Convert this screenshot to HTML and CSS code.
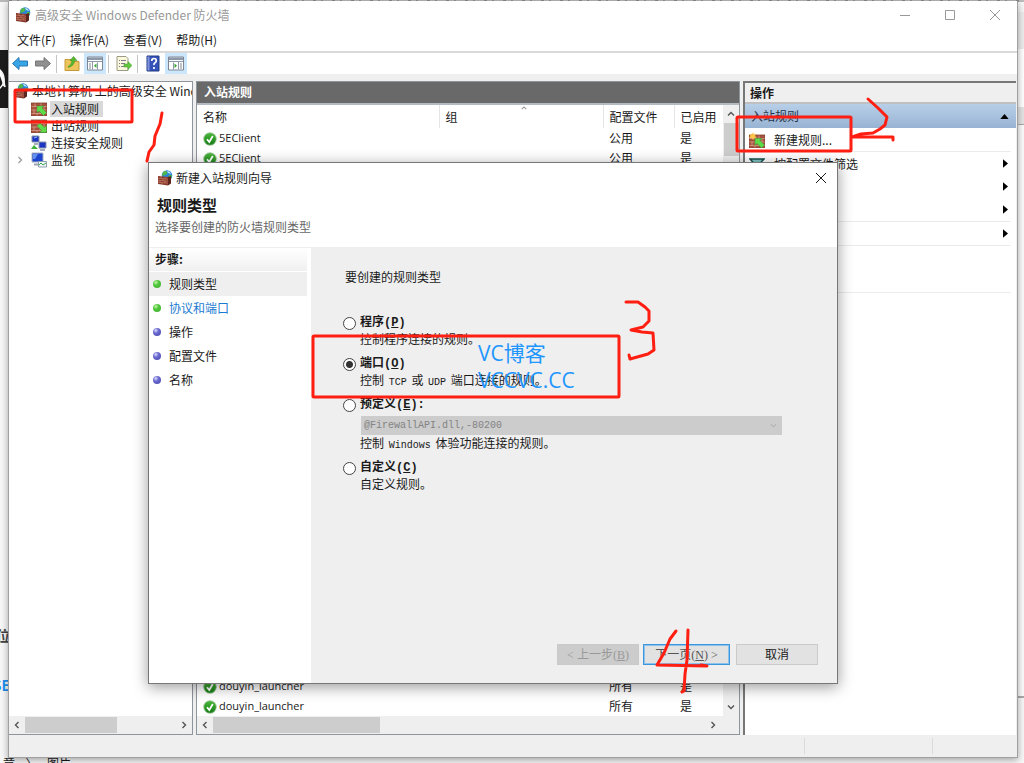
FILE: index.html
```html
<!DOCTYPE html>
<html lang="zh-CN">
<head>
    <meta charset="UTF-8">
    <meta name="viewport" content="width=device-width, initial-scale=1.0">
    <title>高级安全 Windows Defender 防火墙</title>
    <link rel="stylesheet" href="styles.css">
</head>
<body>
    <!-- Shared icons -->
    <svg class="defs" width="0" height="0">
        <defs>
            <linearGradient id="okFill" x1="0" y1="0" x2="0" y2="1">
                <stop offset="0" stop-color="#4cb83c"/>
                <stop offset="1" stop-color="#157a14"/>
            </linearGradient>
            <radialGradient id="greenBall" cx=".35" cy=".3" r=".7">
                <stop offset="0" stop-color="#c8f5b0"/>
                <stop offset=".5" stop-color="#4fc83c"/>
                <stop offset="1" stop-color="#48b636"/>
            </radialGradient>
            <radialGradient id="blueBall" cx=".35" cy=".3" r=".7">
                <stop offset="0" stop-color="#dcdcff"/>
                <stop offset=".5" stop-color="#6a6ad0"/>
                <stop offset="1" stop-color="#5454b8"/>
            </radialGradient>
        </defs>
        <symbol id="bricks" viewBox="0 0 16 14">
            <path d="M0 1h16v13H0z" fill="#a5523e"/>
            <path d="M0 4.500h16M0 8h16M0 11.500h16M4 1v3.500M10 1v3.500M7 4.500v3.500M13 4.500V8M3 8v3.500M9 8v3.500M6 11.500V14M13 11.500V14" stroke="#d9a08c" stroke-width=".8"/>
            <path d="M0 1h16v13H0z" fill="none" stroke="#83402f" stroke-width=".8"/>
        </symbol>
        <symbol id="firewall" viewBox="0 0 16 16">
            <circle cx="10" cy="5.500" r="5.300" fill="#2a86d8"/>
            <path d="M6 2q3-2 4 0t-2 3l-3 1zM12 5l3 0-1 4-3 1z" fill="#51b848"/>
            <path d="M10 1q3 0 4 3l-3-1z" fill="#bfe5fa"/>
            <path d="M1 6l10 1v8.500L1 14z" fill="#87382a"/>
            <path d="M11 7l3-1v7.500l-3 2z" fill="#5d251d"/>
            <path d="M1 8.200l10 1M1 10.200l10 1M1 12.200l10 1M4 6.500v2M8 7v2M6 9v2M3 10.500v2M8 11v2M5 12.500v2" stroke="#d28c74" stroke-width=".6"/>
        </symbol>
        <symbol id="ruleIn" viewBox="0 0 16 14">
            <use href="#bricks" width="16" height="14"/>
            <path d="M6 4l7 0-2 2 4.500 4.500-3 3L8 9l-2 2z" fill="#5cdc48" stroke="#3a8f30" stroke-width=".5"/>
        </symbol>
        <symbol id="ruleOut" viewBox="0 0 16 14">
            <use href="#bricks" width="16" height="14"/>
            <path d="M15.500 13.500l-7 0 2-2L6 7l3-3 4.500 4.500 2-2z" fill="#5cdc48" stroke="#3a8f30" stroke-width=".5"/>
        </symbol>
        <symbol id="ruleNew" viewBox="0 0 16 16">
            <use href="#bricks" y="2" width="16" height="14"/>
            <path d="M6 6.500l7 0-2 2 4.500 4.500-3 3L8 11.500l-2 2z" fill="#5cdc48" stroke="#3a8f30" stroke-width=".5"/>
            <path d="M4 0l1 2.500 2.500-1L6 4l2 1.500-2.500.5L4 8 3 6 0 6l1.500-2L0 2l3 .5z" fill="#ffc54a"/>
        </symbol>
        <symbol id="conn" viewBox="0 0 16 16">
            <path d="M1 1h7v6H1zM8 7h7v6H8z" fill="#1c35c4" stroke="#8894a8"/>
            <path d="M3 9h4M9 15h5" stroke="#8894a8" stroke-width="1.500"/>
            <path d="M0 14l3-4 4 4z" fill="#3fb23a"/>
            <path d="M3 3l3-1" stroke="#8cb4ff"/>
        </symbol>
        <symbol id="monitor" viewBox="0 0 16 16">
            <path d="M1 1h11v9H1z" fill="#1c44cc" stroke="#a6b2c0"/>
            <path d="M2 2h5L4 7H2z" fill="#6290f0"/>
            <path d="M3 12.500h6" stroke="#98a4b0" stroke-width="2"/>
            <path d="M7.500 9.500h8v5.500h-8z" fill="#eef6fa" stroke="#8fa0b0"/>
            <path d="M8 13l2-2 2 2 3-2" fill="none" stroke="#37a84b"/>
        </symbol>
        <symbol id="ok" viewBox="0 0 14 14">
            <circle cx="7" cy="7" r="6.300" fill="url(#okFill)" stroke="#a4c8a0" stroke-width=".8"/>
            <path d="M4 7.200l2.300 2.800L9.800 4" fill="none" stroke="#fff" stroke-width="1.800"/>
        </symbol>
        <symbol id="left" viewBox="0 0 8 8"><path d="M5.500 1L2.500 4l3 3" fill="none" stroke="currentColor" stroke-width="1.400"/></symbol>
        <symbol id="right" viewBox="0 0 8 8"><path d="M2.500 1l3 3-3 3" fill="none" stroke="currentColor" stroke-width="1.400"/></symbol>
        <symbol id="up" viewBox="0 0 8 8"><path d="M1 5.500l3-3 3 3" fill="none" stroke="currentColor" stroke-width="1.400"/></symbol>
        <symbol id="down" viewBox="0 0 8 8"><path d="M1 2.500l3 3 3-3" fill="none" stroke="currentColor" stroke-width="1.400"/></symbol>
        <symbol id="close" viewBox="0 0 10 10"><path d="M0 0l10 10M10 0L0 10" stroke="currentColor"/></symbol>
    </svg>

    <!-- Browser page behind the windows -->
    <div class="backdrop">
        <div class="tab-strip"></div>
        <div class="page-edge">
            <svg class="wp" viewBox="0 0 8 58"><path d="M-8 17a12 12 0 0 1 0 24" fill="none" stroke="#fff" stroke-width="1.500"/><path d="M-1 20q6 8 5 16M0 23l5 14" fill="none" stroke="#fff" stroke-width="2"/></svg>
        </div>
        <span class="frag frag-title">位</span>
        <span class="frag frag-link">SE</span>
        <div class="crumbs"><span>章</span><span>〉</span><span>图片</span></div>
        <div class="right-edge"></div>
    </div>

    <!-- Main firewall window -->
    <main class="window">
        <header class="titlebar">
            <svg class="icon"><use href="#firewall"/></svg>
            <span class="caption">高级安全 Windows Defender 防火墙</span>
            <button class="winbtn" aria-label="最小化"><svg width="10" height="10"><path d="M0 5.500h10" stroke="currentColor"/></svg></button>
            <button class="winbtn" aria-label="最大化"><svg width="10" height="10"><path d="M.5.5h9v9h-9z" fill="none" stroke="currentColor"/></svg></button>
            <button class="winbtn" aria-label="关闭"><svg width="10" height="10"><use href="#close"/></svg></button>
        </header>
        <nav class="menubar">
            <button>文件(F)</button>
            <button>操作(A)</button>
            <button>查看(V)</button>
            <button>帮助(H)</button>
        </nav>
        <div class="toolbar">
            <button aria-label="后退"><svg viewBox="0 0 16 16"><path d="M.5 8L7 2v3.500h8.500v5H7V14z" fill="#38a5e4" stroke="#2477b8"/></svg></button>
            <button aria-label="前进"><svg viewBox="0 0 16 16"><path d="M15.500 8L9 2v3.500H.5v5H9V14z" fill="#909090" stroke="#777"/></svg></button>
            <i class="sep"></i>
            <button aria-label="向上"><svg viewBox="0 0 16 16"><path d="M1 4h6l1 2h7v9H1z" fill="#eec55c" stroke="#c49b38"/><path d="M4 11q4-2 4-6H6l3.500-4L13 5h-2.500q0 5-6 7z" fill="#55b92f" stroke="#2f8a1a" stroke-width=".5"/></svg></button>
            <button class="on" aria-label="控制台树"><svg viewBox="0 0 16 16"><path d="M.5 1.500h15v13H.5z" fill="#fff" stroke="#7d8793"/><path d="M1 2h14v2.500H1z" fill="#8d98a8"/><path d="M1 6h14M5.500 6v8M10.500 7v7" stroke="#8d98a8"/><path d="M2 8.500h2M2 10.500h2M2 12.500h2" stroke="#7d8793"/><path d="M9.500 8v4.500L7 10.200z" fill="#31a52c"/></svg></button>
            <i class="sep"></i>
            <button aria-label="导出列表"><svg viewBox="0 0 16 16"><path d="M1 1h9l2 2v12H1z" fill="#fbf8dc" stroke="#9b9b86"/><path d="M3 5h1M5 5h5M3 8h1M5 8h4M3 11h1M5 11h4" stroke="#7d7d90"/><path d="M8 8.500h4V6l4 4-4 4v-2.500H8z" fill="#63c840" stroke="#3c9a22" stroke-width=".5"/></svg></button>
            <i class="sep"></i>
            <button aria-label="帮助"><svg viewBox="0 0 16 16"><path d="M2 .5h12v15H2z" fill="#3552b8" stroke="#233a86"/><path d="M2.500 1h2v14h-2z" fill="#8295d8"/><path d="M6.700 5.500q0-2.500 2.300-2.500t2.300 2.200q0 1.300-1.300 2T9 9.700M9 11.500v2" fill="none" stroke="#fff" stroke-width="1.700"/></svg></button>
            <button class="on" aria-label="操作窗格"><svg viewBox="0 0 16 16"><path d="M.5 1.500h15v13H.5z" fill="#fff" stroke="#7d8793"/><path d="M1 2h14v2.500H1z" fill="#8d98a8"/><path d="M1 6h14M10.500 6v8M5.500 7v7" stroke="#8d98a8"/><path d="M12 8.500h2M12 10.500h2M12 12.500h2" stroke="#7d8793"/><path d="M6.500 8v4.500L9 10.200z" fill="#31a52c"/></svg></button>
        </div>

        <div class="panes">
            <!-- Console tree -->
            <section class="tree-pane">
                <ul class="tree">
                    <li class="root"><svg class="icon"><use href="#firewall"/></svg><span>本地计算机 上的高级安全 Windows</span></li>
                    <li><svg class="icon"><use href="#ruleIn"/></svg><span class="selected">入站规则</span></li>
                    <li><svg class="icon"><use href="#ruleOut"/></svg><span>出站规则</span></li>
                    <li><svg class="icon"><use href="#conn"/></svg><span>连接安全规则</span></li>
                    <li class="branch"><svg class="twisty"><use href="#right"/></svg><svg class="icon"><use href="#monitor"/></svg><span>监视</span></li>
                </ul>
                <div class="hscroll">
                    <svg><use href="#left"/></svg>
                    <div class="track"><div class="thumb tree-thumb"></div></div>
                    <svg><use href="#right"/></svg>
                </div>
            </section>

            <!-- Rule list -->
            <section class="list-pane">
                <h2>入站规则</h2>
                <div class="list-box">
                    <div class="list-main">
                        <table class="rules">
                            <colgroup><col class="c-name"><col class="c-group"><col class="c-profile"><col></colgroup>
                            <thead>
                                <tr><th>名称</th><th>组<svg class="sort"><use href="#up"/></svg></th><th>配置文件</th><th>已启用</th></tr>
                            </thead>
                            <tbody>
                                <tr><td class="name"><svg class="ok"><use href="#ok"/></svg>5EClient</td><td></td><td>公用</td><td>是</td></tr>
                                <tr><td class="name"><svg class="ok"><use href="#ok"/></svg>5EClient</td><td></td><td>公用</td><td>是</td></tr>
                                <tr class="filler"><td colspan="4"></td></tr>
                                <tr><td class="name"><svg class="ok"><use href="#ok"/></svg>douyin_launcher</td><td></td><td>所有</td><td>是</td></tr>
                                <tr><td class="name"><svg class="ok"><use href="#ok"/></svg>douyin_launcher</td><td></td><td>所有</td><td>是</td></tr>
                            </tbody>
                        </table>
                        <div class="vscroll">
                            <svg><use href="#up"/></svg>
                            <div class="vthumb"></div>
                            <svg><use href="#down"/></svg>
                        </div>
                    </div>
                    <div class="hscroll list-scroll">
                        <svg><use href="#left"/></svg>
                        <div class="track"><div class="thumb list-thumb"></div></div>
                        <svg><use href="#right"/></svg>
                    </div>
                </div>
            </section>

            <!-- Actions -->
            <section class="action-pane">
                <h2>操作</h2>
                <h3>入站规则<svg viewBox="0 0 10 6"><path d="M0 6l5-6 5 6z"/></svg></h3>
                <ul class="actions">
                    <li class="line"><svg class="icon"><use href="#ruleNew"/></svg><a href="#">新建规则...</a></li>
                    <li><svg class="icon" viewBox="0 0 16 16"><path d="M1 3h14l-5.500 6v5l-3-2V9z" fill="#7cc4c4" stroke="#174d4d" stroke-width="1.500"/></svg><a href="#">按配置文件筛选</a><svg class="more" viewBox="0 0 6 10"><path d="M0 0l6 5-6 5z"/></svg></li>
                    <li><svg class="more" viewBox="0 0 6 10"><path d="M0 0l6 5-6 5z"/></svg></li>
                    <li class="line"><svg class="more" viewBox="0 0 6 10"><path d="M0 0l6 5-6 5z"/></svg></li>
                    <li class="line"><svg class="more" viewBox="0 0 6 10"><path d="M0 0l6 5-6 5z"/></svg></li>
                    <li></li>
                    <li class="line"></li>
                </ul>
            </section>
        </div>
        <footer class="statusbar"><span></span><span></span><span></span></footer>
    </main>

    <!-- New rule wizard -->
    <div class="dialog" role="dialog" aria-label="新建入站规则向导">
        <header class="dialog-title">
            <svg class="icon"><use href="#firewall"/></svg>
            <span>新建入站规则向导</span>
            <button class="winbtn" aria-label="关闭"><svg width="10" height="10"><use href="#close"/></svg></button>
        </header>
        <div class="dialog-head">
            <h1>规则类型</h1>
            <p>选择要创建的防火墙规则类型</p>
        </div>
        <div class="dialog-body">
            <aside class="steps">
                <h2>步骤:</h2>
                <ol>
                    <li class="current"><svg><circle cx="4" cy="4" r="4" fill="url(#greenBall)"/></svg>规则类型</li>
                    <li><svg><circle cx="4" cy="4" r="4" fill="url(#greenBall)"/></svg><a href="#">协议和端口</a></li>
                    <li><svg><circle cx="4" cy="4" r="4" fill="url(#blueBall)"/></svg>操作</li>
                    <li><svg><circle cx="4" cy="4" r="4" fill="url(#blueBall)"/></svg>配置文件</li>
                    <li><svg><circle cx="4" cy="4" r="4" fill="url(#blueBall)"/></svg>名称</li>
                </ol>
            </aside>
            <form class="content">
                <p class="question">要创建的规则类型</p>
                <div class="options">
                    <div class="option">
                        <input type="radio" name="type" id="program">
                        <label for="program">程序(<u>P</u>)</label>
                        <p>控制程序连接的规则。</p>
                    </div>
                    <div class="option">
                        <input type="radio" name="type" id="port" checked>
                        <label for="port">端口(<u>O</u>)</label>
                        <p>控制 <span class="mono">TCP</span> 或 <span class="mono">UDP</span> 端口连接的规则。</p>
                    </div>
                    <div class="option">
                        <input type="radio" name="type" id="predefined">
                        <label for="predefined">预定义(<u>E</u>):</label>
                        <div class="select-wrap">
                            <select aria-label="预定义" disabled><option>@FirewallAPI.dll,-80200</option></select>
                            <svg><use href="#down"/></svg>
                        </div>
                        <p>控制 <span class="mono">Windows</span> 体验功能连接的规则。</p>
                    </div>
                    <div class="option">
                        <input type="radio" name="type" id="custom">
                        <label for="custom">自定义(<u>C</u>)</label>
                        <p>自定义规则。</p>
                    </div>
                </div>
                <div class="buttons">
                    <button type="button" disabled>&lt; 上一步(<u>B</u>)</button>
                    <button type="button" class="next">下一页(<u>N</u>) &gt;</button>
                    <button type="button" class="cancel">取消</button>
                </div>
            </form>
        </div>
    </div>

    <!-- Watermark and pen marks -->
    <div class="watermark">VC博客<br>VCCVC.CC</div>
    <svg class="marks" width="1024" height="763" viewBox="0 0 1024 763">
        <rect x="15" y="90" width="117" height="32" rx="1"/>
        <rect x="737" y="117" width="114" height="34" rx="1"/>
        <rect x="313" y="336" width="306" height="61" rx="1"/>
        <path d="M162 113l-2 11-5 12-1 9-5 7-2 9"/>
        <path d="M868 99l10 9 9 9-2 8-5 4-7 4-12 1-9 3h41v3"/>
        <path d="M626 302h12l7 5 4 4v10l-6 6-12 3 11 2 11 1 1 17-6 4-18 5-1-4"/>
        <path d="M676 631l-6 8-6 14-7 12 50 1-6-1M688 630l-1 30-2 14-1 17-2 1"/>
    </svg>
</body>
</html>
```

FILE: styles.css
```css
* { box-sizing: border-box; }
body {
    margin: 0;
    height: 100vh;
    overflow: hidden;
    position: relative;
    background: #f7f7f7;
    color: #1a1a1a;
    font-family: "Noto Sans CJK SC", sans-serif;
    font-size: 12px;
    line-height: 16px;
}
h1, h2, h3, p, ul, ol { margin: 0; padding: 0; }
ul, ol { list-style: none; }
a { color: inherit; text-decoration: none; }
button, select { font: inherit; color: inherit; }
.defs { position: absolute; }
.icon { width: 16px; height: 16px; flex: none; }

/* Browser page behind */
.backdrop { position: absolute; inset: 0; }
.tab-strip {
    height: 2px;
    background: repeating-linear-gradient(90deg, #b9b9b9 0 9px, #8b8b8b 9px 12px, #bcbcbc 12px 17px, #949494 17px 19px);
}
.page-edge {
    position: absolute;
    top: 50px;
    left: 0;
    width: 8px;
    height: 58px;
    background: #1d1d1d;
}
.wp { display: block; width: 8px; height: 58px; }
.frag { position: absolute; right: calc(100% - 10px); font-size: 14px; }
.frag-title { top: 627px; color: #444; font-weight: bold; }
.frag-link { top: 677px; color: #1e8ff0; font-weight: bold; }
.crumbs {
    position: absolute;
    left: 3px;
    bottom: -8px;
    display: flex;
    gap: 10px;
}
.right-edge {
    position: absolute;
    top: 12px;
    right: 0;
    width: 7px;
    height: 686px;
    background: linear-gradient(#ececec 0 37px, #fff 37px 95px, #e4e4e4 95px 112px, #aaa 112px 113px, #fcfcfc 113px);
    border-bottom: 2px solid #aaa;
}

/* Main window */
.window {
    position: absolute;
    top: 1px;
    right: 6px;
    bottom: 5px;
    left: 8px;
    display: flex;
    flex-direction: column;
    background: #efefef;
    border: 1px solid #a0a0a0;
    border-top: 0;
    box-shadow: 0 2px 7px rgba(0, 0, 0, 0.35);
}
.titlebar {
    display: flex;
    align-items: center;
    height: 28px;
    padding-left: 6px;
    background: #fff;
    color: #999;
}
.caption { flex: 1; margin-left: 4px; }
.winbtn {
    display: flex;
    justify-content: center;
    align-items: center;
    width: 45px;
    height: 28px;
    padding: 0;
    border: 0;
    background: none;
}
.menubar {
    display: flex;
    gap: 14px;
    height: 24px;
    padding-left: 8px;
    background: #fff;
    border-bottom: 2px solid #d9d9d9;
}
.menubar button { padding: 0; border: 0; background: none; }
.toolbar {
    display: flex;
    align-items: center;
    gap: 1px;
    height: 21px;
    background: #fff;
}
.toolbar button {
    width: 22px;
    height: 21px;
    padding: 2px 3px;
    border: 0;
    background: none;
}
.toolbar button.on { background: #cce6fb; }
.toolbar svg { display: block; width: 16px; height: 17px; }
.sep { width: 1px; height: 18px; margin: 0 3px 0 1px; background: #c4c4c4; }

/* Panes */
.panes {
    display: flex;
    flex: 1;
    gap: 3px;
    min-height: 0;
    padding-top: 7px;
}
.tree-pane {
    display: flex;
    flex-direction: column;
    flex: 0 0 184px;
    background: #fff;
    border: 1px solid #8f959c;
    border-left: 0;
    overflow: hidden;
}
.tree { flex: 1; }
.tree li {
    display: flex;
    align-items: center;
    gap: 3px;
    height: 17px;
    padding-left: 22px;
    white-space: nowrap;
}
.tree li.root { height: 18px; padding-left: 4px; gap: 2px; }
.tree li.branch { padding-left: 7px; }
.tree span { padding: 0 1px; }
.tree .selected { background: #d9d9d9; padding-right: 4px; }
.twisty { width: 8px; height: 8px; margin-right: 4px; color: #a0a0a0; }
.hscroll {
    display: flex;
    align-items: center;
    height: 18px;
    background: #efefef;
    color: #555;
}
.hscroll svg { flex: none; width: 8px; height: 8px; margin: 0 4px; }
.track { flex: 1; height: 16px; }
.thumb { height: 100%; background: #cdcdcd; }
.tree-thumb { width: 61%; }
.list-thumb { width: 34%; }

.list-pane {
    display: flex;
    flex-direction: column;
    flex: 1;
    min-width: 0;
    border: 1px solid #8f959c;
}
.list-pane h2 {
    height: 21px;
    padding: 2px 7px;
    background: #696969;
    color: #fff;
    font-size: 12px;
}
.list-box {
    display: flex;
    flex-direction: column;
    flex: 1;
    min-height: 0;
    background: #fff;
    border-top: 2px solid #b4bac2;
}
.list-main { display: flex; flex: 1; }
.rules {
    flex: 1;
    border-collapse: collapse;
    table-layout: fixed;
    width: 100%;
}
.c-name { width: 242px; }
.c-group { width: 164px; }
.c-profile { width: 71px; }
.rules th {
    height: 23px;
    padding: 0 6px;
    border-right: 1px solid #e5e5e5;
    font-weight: normal;
    text-align: left;
    white-space: nowrap;
    position: relative;
}
.rules th:last-child { padding-right: 0; border-right: 0; }
.sort { position: absolute; top: 0; left: 50%; width: 6px; height: 6px; color: #999; }
.rules td { height: 20px; padding: 0 6px; }
.rules .name { font-family: "Open Sans", "Noto Sans CJK SC", sans-serif; font-size: 11px; }
.rules .filler td { height: auto; }
.ok { width: 14px; height: 14px; margin-right: 2px; vertical-align: middle; }
.vscroll {
    display: flex;
    flex-direction: column;
    align-items: center;
    width: 16px;
    background: #efefef;
    color: #555;
}
.vscroll svg { width: 8px; height: 8px; margin: 5px 0; }
.vthumb { width: 15px; height: 33px; margin-bottom: auto; background: #cdcdcd; }
.list-scroll { padding-right: 18px; }

.action-pane {
    flex: 0 0 273px;
    background: #fff;
    border: solid #777;
    border-width: 2px 0 0 2px;
    margin-right: 1px;
}
.action-pane h2 {
    height: 21px;
    padding: 2px 5px;
    background: #efefef;
    border-bottom: 2px solid #c0c0c0;
    font-size: 12px;
}
.action-pane h3 {
    display: flex;
    justify-content: space-between;
    align-items: center;
    height: 24px;
    padding: 0 7px 0 6px;
    background: linear-gradient(#b8cfe8, #98b3d3);
    color: #223549;
    font-size: 12px;
    font-weight: normal;
}
.action-pane h3 svg { width: 9px; height: 5px; fill: #000; }
.actions li {
    display: flex;
    align-items: center;
    gap: 9px;
    height: 23px;
    margin-right: 5px;
    padding-left: 4px;
}
.actions li.line { height: 24px; border-bottom: 1px solid #ececec; }
.more { width: 5px; height: 9px; margin-left: auto; margin-right: 3px; fill: #000; }

.statusbar {
    display: flex;
    height: 22px;
    padding: 3px 0;
}
.statusbar span { border-right: 1px solid #dadada; flex: 0 0 128px; }
.statusbar span:first-child { flex: 1; }
.statusbar span:last-child { flex: 0 0 84px; border: 0; }

/* Wizard dialog */
.dialog {
    position: absolute;
    top: 162px;
    left: 148px;
    width: 690px;
    height: 522px;
    display: flex;
    flex-direction: column;
    background: #fff;
    border: 1px solid #777;
    box-shadow: 0 3px 14px rgba(0, 0, 0, 0.4);
}
.dialog-title {
    display: flex;
    align-items: center;
    height: 29px;
    padding-left: 8px;
}
.dialog-title span { flex: 1; margin-left: 3px; }
.dialog-title .winbtn { width: 33px; }
.dialog-head {
    height: 56px;
    padding: 2px 6px;
    border-bottom: 1px solid #eee;
}
.dialog-head h1 { padding-left: 2px; font-size: 15px; line-height: 22px; }
.dialog-head p { padding-top: 3px; color: #666; }
.dialog-body { display: flex; flex: 1; min-height: 0; }
.steps { width: 158px; margin-right: 4px; }
.steps h2 {
    height: 24px;
    padding: 3px 6px;
    background: linear-gradient(#fff, #f0f0f0);
    border-bottom: 1px solid #fff;
    font-size: 12px;
}
.steps li {
    display: flex;
    align-items: center;
    gap: 8px;
    height: 24px;
    padding-left: 4px;
}
.steps li svg { width: 8px; height: 8px; }
.steps .current { background: #efefef; }
.steps a { color: #1b7ad2; }
.content {
    display: flex;
    flex-direction: column;
    flex: 1;
    padding: 23px 19px 18px 32px;
    background: #efefef;
    font-family: "Liberation Mono", "Noto Sans CJK SC", monospace;
}
.question { margin-bottom: 28px; padding-left: 2px; }
.options { display: flex; flex-direction: column; gap: 9px; }
.option {
    display: grid;
    grid-template-columns: 17px 1fr;
    align-items: center;
}
.option input {
    appearance: none;
    width: 13px;
    height: 13px;
    margin: 0;
    border: 1px solid #444;
    border-radius: 50%;
    background: #fff;
}
.option input:checked { background: radial-gradient(#333 0 3px, #fff 4px); }
.option label { height: 16px; font-weight: bold; }
.option p, .select-wrap { grid-column: 2; }
.option p { height: 16px; font-family: "Noto Sans CJK SC", sans-serif; }
.option .mono { font-family: "Liberation Mono", monospace; font-size: 10px; line-height: 10px; padding: 0 2px; }
.select-wrap { position: relative; width: 422px; height: 22px; padding: 3px 0 0 1px; }
.select-wrap select {
    display: block;
    appearance: none;
    width: 100%;
    height: 19px;
    padding: 0 3px;
    border: 0;
    background: #cccccc;
    color: #838383;
    font-size: 10px;
    opacity: 1;
}
.select-wrap svg { position: absolute; top: 9px; right: 5px; width: 7px; height: 7px; color: #b5b5b5; }
.buttons {
    display: flex;
    justify-content: flex-end;
    gap: 4px;
    margin-top: auto;
    font-family: "Liberation Serif", "Noto Sans CJK SC", serif;
}
.buttons button {
    width: 82px;
    height: 21px;
    padding: 0;
    border: 1px solid #cacaca;
    background: #e2e2e2;
    line-height: 18px;
}
.buttons button:disabled { background: #cccccc; color: #999; }
.buttons .next { width: 87px; border-color: #3c96dc; box-shadow: inset 0 0 0 1px #8cc2ec; color: #555; }
.buttons .cancel { margin-left: 2px; }

/* Marks over everything */
.watermark {
    position: absolute;
    top: 340px;
    left: 478px;
    color: #1e96ff;
    font-family: "Open Sans", "Noto Sans CJK SC", sans-serif;
    font-size: 21px;
    line-height: 27px;
}
.marks {
    position: absolute;
    top: 0;
    left: 0;
    fill: none;
    stroke: #ff1f12;
    stroke-width: 3px;
    stroke-linecap: round;
    stroke-linejoin: round;
    pointer-events: none;
}
```
